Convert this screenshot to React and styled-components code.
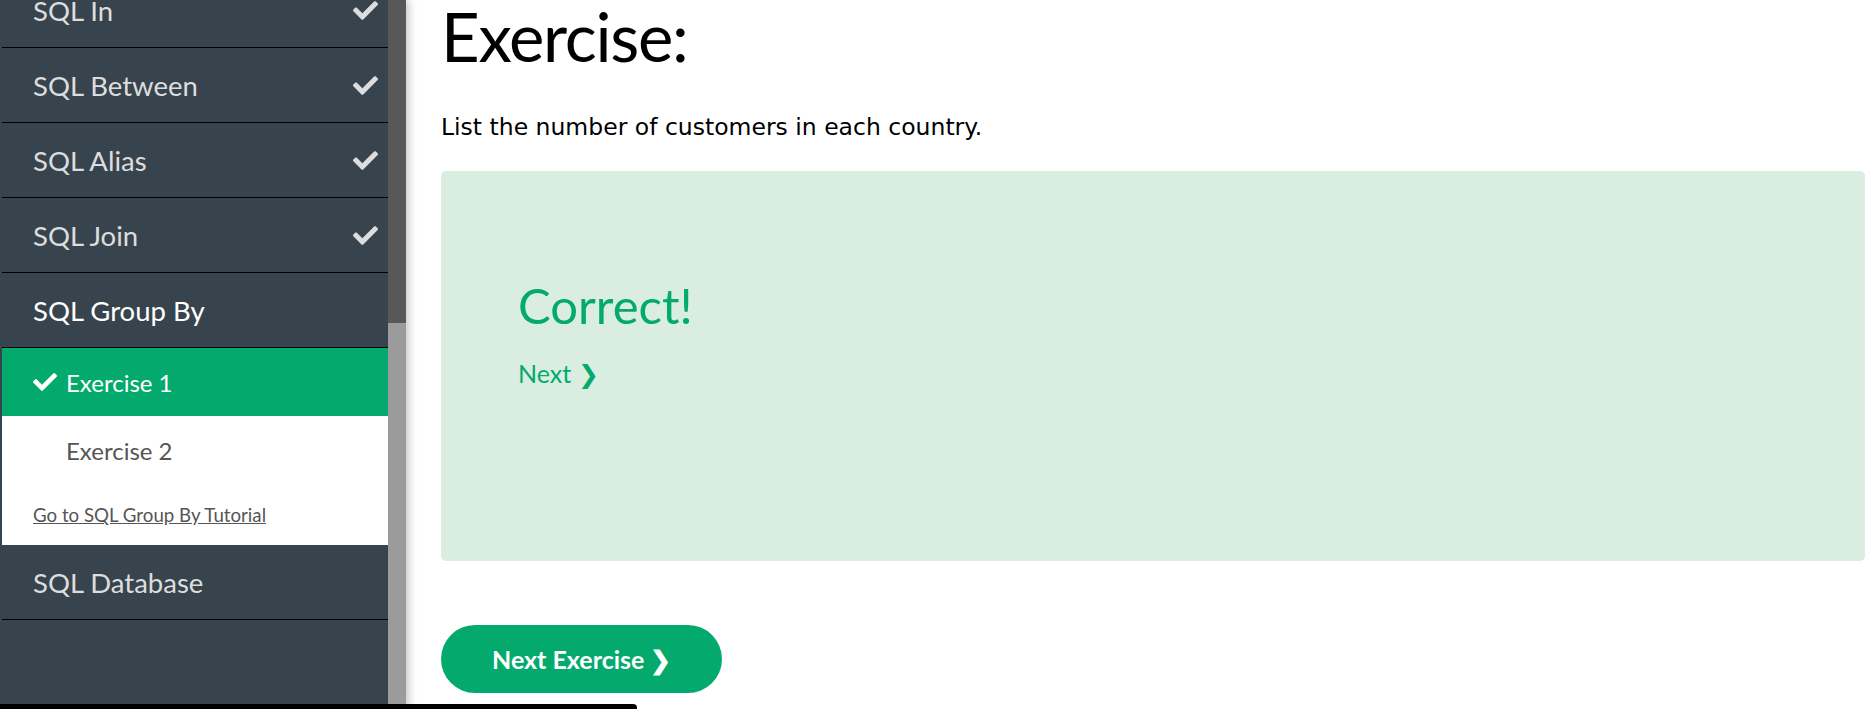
import styled, { createGlobalStyle } from "styled-components";
import { FaCheck } from "react-icons/fa";

const GlobalStyle = createGlobalStyle`
  html, body {
    margin: 0;
    padding: 0;
    background: #fff;
    overflow: hidden;
  }
  * {
    box-sizing: border-box;
  }
`;

const Page = styled.div`
  display: flex;
  height: 709px;
  width: 1873px;
  overflow: hidden;
`;

const Sidebar = styled.aside`
  display: flex;
  flex-shrink: 0;
  width: 406px;
  height: 100%;
  background: #38444d;
  box-shadow: 3px 0 8px rgba(0, 0, 0, 0.22);
  z-index: 1;
`;

const MenuList = styled.nav`
  flex: 1;
  margin: -27px 0 0 2px;
  font-family: Lato, "Open Sans", sans-serif;
`;

const MenuRow = styled.div`
  height: 75px;
  display: flex;
  align-items: center;
  justify-content: space-between;
  padding: 0 10px 0 31px;
  border-bottom: 1px solid #000;
  font-size: 27.5px;
  color: ${(p) => (p.$open ? "#fff" : "#ddd")};
`;

const ExerciseRow = styled.div`
  height: 68px;
  display: flex;
  align-items: center;
  gap: 9px;
  padding-left: ${(p) => (p.$done ? "31px" : "64px")};
  background: ${(p) => (p.$done ? "#04aa6d" : "#fff")};
  color: ${(p) => (p.$done ? "#fff" : "#555")};
  font-size: 24px;
`;

const TutorialLink = styled.a`
  display: block;
  background: #fff;
  padding: 19px 0 18px 31px;
  font-size: 18.7px;
  line-height: 24px;
  color: #555;
  text-decoration: underline;
`;

const Scrollbar = styled.div`
  width: 18px;
  height: 704px;
  display: flex;
  flex-direction: column;
  background: #9b9b9b;
`;

const Thumb = styled.div`
  height: 323px;
  background: #585858;
`;

const Main = styled.main`
  flex: 1;
  padding: 1px 8px 0 35px;
  font-family: Lato, "Open Sans", sans-serif;
`;

const Heading = styled.h1`
  margin: 0;
  font-size: 67px;
  font-weight: 400;
  letter-spacing: -1.3px;
  line-height: 70px;
  color: #000;
`;

const Question = styled.p`
  margin: 41px 0 0 0;
  font-family: "DejaVu Sans", Verdana, sans-serif;
  font-size: 23.5px;
  line-height: 30px;
  color: #000;
`;

const ResultPanel = styled.section`
  margin-top: 29px;
  height: 390px;
  background: #d9eee1;
  border-radius: 5px;
  padding: 104px 0 0 77px;
  color: #04aa6d;
`;

const ResultTitle = styled.h2`
  margin: 0;
  font-size: 49px;
  font-weight: 400;
  line-height: 60px;
`;

const NextLink = styled.a`
  display: inline-block;
  margin-top: 23px;
  font-size: 25px;
  line-height: 30px;
  color: #04aa6d;
`;

const NextButton = styled.button`
  margin-top: 64px;
  height: 68px;
  padding: 0 51px;
  border: none;
  border-radius: 34px;
  background: #04aa6d;
  color: #fff;
  font-family: Lato, "Open Sans", sans-serif;
  font-weight: 700;
  font-size: 25px;
`;

const BottomBar = styled.div`
  position: fixed;
  left: 0;
  bottom: 0;
  width: 637px;
  height: 5px;
  background: #000;
  border-top-right-radius: 4px;
  z-index: 2;
`;

const chapters = ["SQL In", "SQL Between", "SQL Alias", "SQL Join"];

const App = () => {
  return (
    <Page>
      <GlobalStyle />
      <Sidebar>
        <MenuList>
          {chapters.map((c) => (
            <MenuRow key={c}>
              {c}
              <FaCheck size={25} />
            </MenuRow>
          ))}
          <MenuRow $open>SQL Group By</MenuRow>
          <ExerciseRow $done>
            <FaCheck size={24} />
            Exercise 1
          </ExerciseRow>
          <ExerciseRow>Exercise 2</ExerciseRow>
          <TutorialLink>Go to SQL Group By Tutorial</TutorialLink>
          <MenuRow>SQL Database</MenuRow>
        </MenuList>
        <Scrollbar>
          <Thumb />
        </Scrollbar>
      </Sidebar>
      <Main>
        <Heading>Exercise:</Heading>
        <Question>List the number of customers in each country.</Question>
        <ResultPanel>
          <ResultTitle>Correct!</ResultTitle>
          <NextLink>Next ❯</NextLink>
        </ResultPanel>
        <NextButton>Next Exercise ❯</NextButton>
      </Main>
      <BottomBar />
    </Page>
  );
};

export default App;
